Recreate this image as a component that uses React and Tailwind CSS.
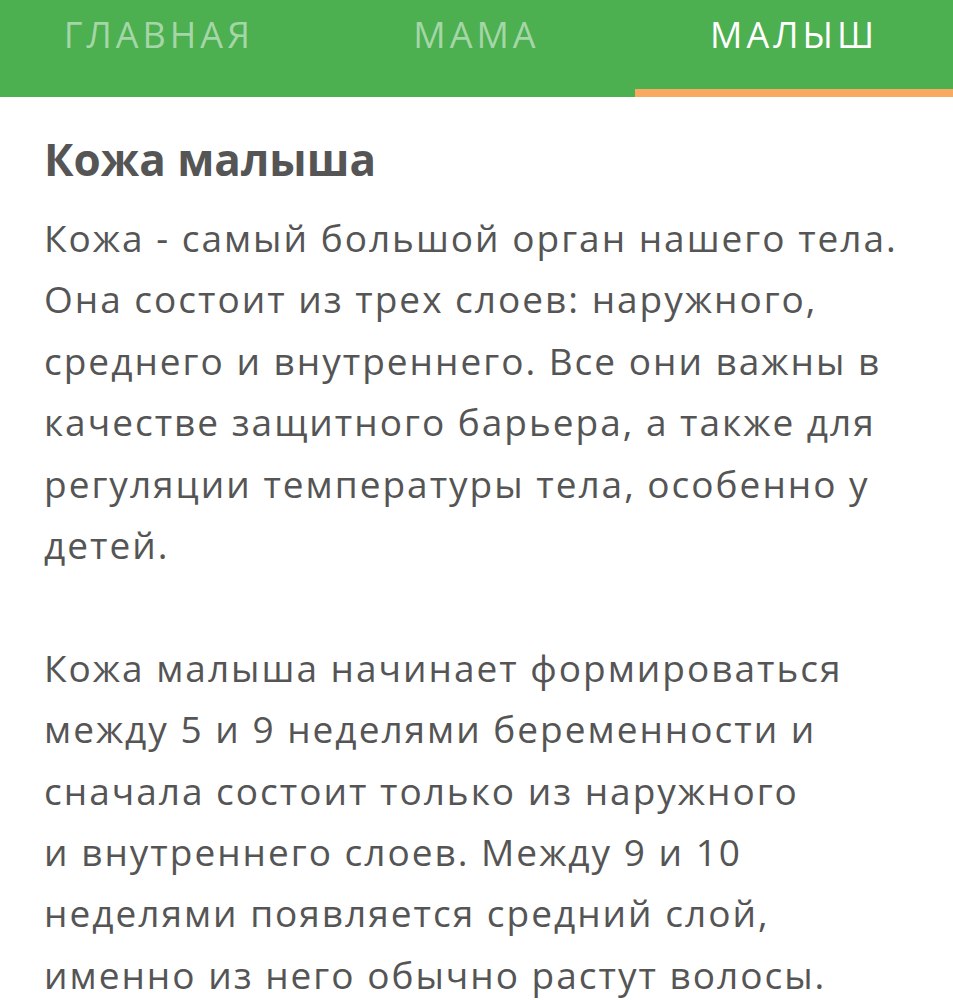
import React from 'react';

const tabs = [
  { label: 'ГЛАВНАЯ', active: false },
  { label: 'МАМА', active: false },
  { label: 'МАЛЫШ', active: true },
];

const para1 = [
  'Кожа - самый большой орган нашего тела.',
  'Она состоит из трех слоев: наружного,',
  'среднего и внутреннего. Все они важны в',
  'качестве защитного барьера, а также для',
  'регуляции температуры тела, особенно у',
  'детей.',
];

const para2 = [
  'Кожа малыша начинает формироваться',
  'между 5 и 9 неделями беременности и',
  'сначала состоит только из наружного',
  'и внутреннего слоев. Между 9 и 10',
  'неделями появляется средний слой,',
  'именно из него обычно растут волосы.',
];

const Lines = ({ lines }) => (
  <p>
    {lines.map((line, i) => (
      <span key={i} className="block whitespace-nowrap">{line}</span>
    ))}
  </p>
);

export default function App() {
  return (
    <div className="min-h-screen bg-white font-['Open_Sans',sans-serif]">
      {/* Tabs */}
      <div className="grid grid-cols-3 h-[97px] bg-[#4caf50]">
        {tabs.map((tab) => (
          <div key={tab.label} className="relative flex justify-center pt-[13px]">
            <span
              className={`text-[36px] leading-[44px] tracking-[4px] ${
                tab.active ? 'text-white' : 'text-[#a5d6a7]'
              }`}
            >
              {tab.label}
            </span>
            {tab.active && (
              <div className="absolute left-0 right-0 bottom-0 h-[8px] bg-[#f9aa60]" />
            )}
          </div>
        ))}
      </div>

      {/* Content */}
      <div className="px-[44px] pt-[34px] text-[#555555]">
        <h1 className="text-[44px] leading-[56px] font-bold">Кожа малыша</h1>
        <div className="mt-[20px] text-[37px] leading-[61.4px] tracking-[2px]">
          <Lines lines={para1} />
          <div className="h-[61.4px]" />
          <Lines lines={para2} />
        </div>
      </div>
    </div>
  );
}
